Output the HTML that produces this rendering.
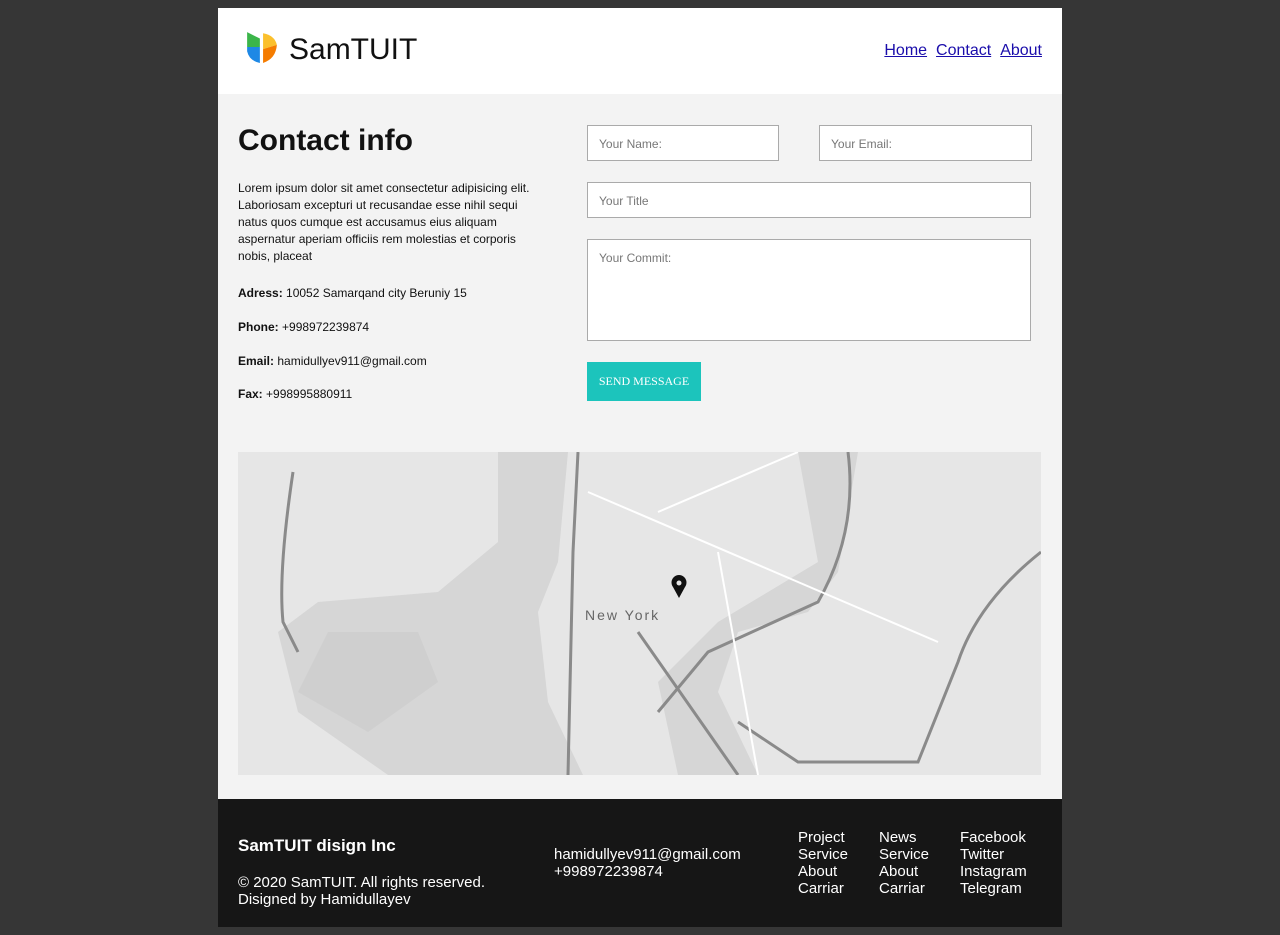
<!DOCTYPE html>
<html><head><meta charset="utf-8"><style>
*{box-sizing:border-box;margin:0;padding:0}
body{background:#363636;width:1280px;height:935px;font-family:"Liberation Sans",Arial,sans-serif;position:relative;overflow:hidden}
.wrap{position:absolute;left:218px;top:8px;width:844px;height:919px}
.hdr{position:absolute;left:0;top:0;width:844px;height:86px;background:#fff}
.logo{position:absolute;left:28px;top:22px}
.brand{position:absolute;left:71px;top:25px;font-size:30px;color:#111}
.nav{position:absolute;right:20px;top:34px;font-size:16px}
.nav a{color:#1a0dab;text-decoration:underline;margin-left:9px}
.main{position:absolute;left:0;top:86px;width:844px;height:705px;background:#f3f3f3}
h1{position:absolute;left:20px;top:30px;font-size:30px;font-weight:bold;color:#111}
.p{position:absolute;left:20px;top:86px;width:310px;font-size:12px;line-height:17px;color:#111}
.i{position:absolute;left:20px;font-size:12px;color:#111}
.in{position:absolute;background:#fff;border:1px solid #aaa;font-size:12px;color:#777;padding:11px 11px}
.btn{position:absolute;left:369px;top:268px;width:114px;height:39px;background:#1cc4bc;color:#fff;font-family:"Liberation Serif",serif;font-size:12px;text-align:center;line-height:39px}
.map{position:absolute;left:20px;top:358px;width:803px;height:323px;background:#e6e6e6;overflow:hidden}
.ftr{position:absolute;left:0;top:791px;width:844px;height:128px;background:#161616;color:#fff}
.ftr div{position:absolute;font-size:15px;line-height:17px}
</style></head><body><div class="wrap">
<div class="hdr">
<svg class="logo" width="32" height="34" viewBox="0 0 30 32">
<path d="M1 2 L13 8 L13 16 L1 16Z" fill="#3bb54a"/>
<path d="M1 16 L13 16 L13 31 Q3 29 1 20Z" fill="#1e88e5"/>
<path d="M16 3 Q27 5 29 14 L16 18Z" fill="#fbc02d"/>
<path d="M16 18 L29 14 Q28 27 16 31Z" fill="#f57c00"/>
</svg>
<div class="brand">SamTUIT</div>
<div class="nav"><a>Home</a><a>Contact</a><a>About</a></div>
</div>
<div class="main">
<h1>Contact info</h1>
<div class="p">Lorem ipsum dolor sit amet consectetur adipisicing elit. Laboriosam excepturi ut recusandae esse nihil sequi natus quos cumque est accusamus eius aliquam aspernatur aperiam officiis rem molestias et corporis nobis, placeat</div>
<div class="i" style="top:192px"><b>Adress:</b> 10052 Samarqand city Beruniy 15</div>
<div class="i" style="top:226px"><b>Phone:</b> +998972239874</div>
<div class="i" style="top:260px"><b>Email:</b> hamidullyev911@gmail.com</div>
<div class="i" style="top:293px"><b>Fax:</b> +998995880911</div>
<div class="in" style="left:369px;top:31px;width:192px;height:36px">Your Name:</div>
<div class="in" style="left:601px;top:31px;width:213px;height:36px">Your Email:</div>
<div class="in" style="left:369px;top:88px;width:444px;height:36px">Your Title</div>
<div class="in" style="left:369px;top:145px;width:444px;height:102px">Your Commit:</div>
<div class="btn">SEND MESSAGE</div>
<div class="map"><svg width="803" height="323" viewBox="0 0 803 323">
<path d="M260 0 L330 0 L320 110 L300 160 L310 250 L345 323 L150 323 L60 260 L40 180 L80 150 L200 140 L260 90Z" fill="#d6d6d6"/>
<path d="M560 0 L620 0 L600 120 L570 160 L500 180 L480 240 L520 323 L440 323 L420 230 L480 170 L580 110Z" fill="#d6d6d6"/>
<path d="M90 180 L180 180 L200 230 L130 280 L60 240Z" fill="#cfcfcf"/>
<g stroke="#8a8a8a" stroke-width="3" fill="none">
<path d="M55 20 Q40 120 45 170 L60 200"/>
<path d="M340 0 L335 100 L330 323"/>
<path d="M610 0 Q620 80 580 150 L470 200 L420 260"/>
<path d="M803 100 Q740 150 720 210 L680 310 L560 310 L500 270"/>
<path d="M400 180 L500 323"/>
</g>
<g stroke="#fff" stroke-width="2" fill="none">
<path d="M350 40 L700 190"/><path d="M420 60 L560 0"/><path d="M480 100 L520 323"/>
</g>
<path d="M441 146 L435 135 A7.5 7.5 0 1 1 447 135Z" fill="#111"/>
<circle cx="441" cy="131" r="2.5" fill="#e6e6e6"/>
<text x="347" y="168" font-size="14" fill="#666" font-family="Liberation Sans" letter-spacing="2">New York</text>
</svg></div>
</div>
<div class="ftr">
<div style="left:20px;top:38px;font-size:17px;font-weight:bold">SamTUIT disign Inc</div>
<div style="left:20px;top:75px">© 2020 SamTUIT. All rights reserved.<br>Disigned by Hamidullayev</div>
<div style="left:336px;top:47px">hamidullyev911@gmail.com<br>+998972239874</div>
<div style="left:580px;top:30px">Project<br>Service<br>About<br>Carriar</div>
<div style="left:661px;top:30px">News<br>Service<br>About<br>Carriar</div>
<div style="left:742px;top:30px">Facebook<br>Twitter<br>Instagram<br>Telegram</div>
</div>
</div></body></html>
